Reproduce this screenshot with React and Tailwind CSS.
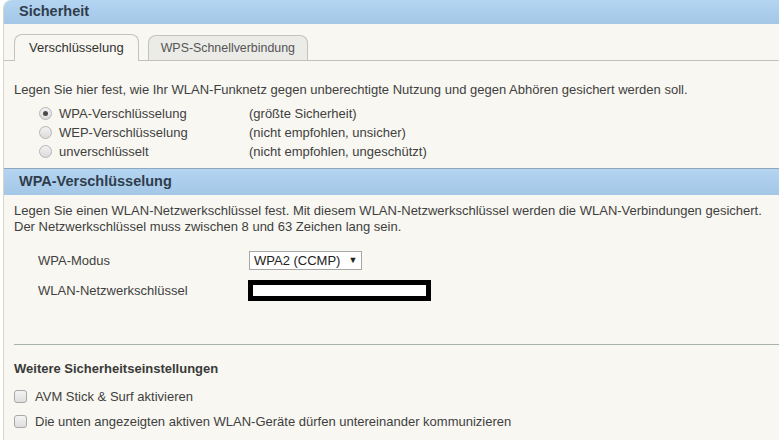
import React from 'react'

const FONT = { fontFamily: '"Liberation Sans", Arial, sans-serif' }

function Radio({ checked }) {
  return (
    <span className="w-[13px] h-[13px] rounded-full border border-[#b5b5b5] bg-gradient-to-b from-[#f2f2f2] to-[#dcdcdc] flex items-center justify-center">
      {checked && <span className="w-[5px] h-[5px] rounded-full bg-[#4a4a4a]" />}
    </span>
  )
}

function Check() {
  return <span className="w-[13px] h-[13px] rounded-[3px] border border-[#a9a9a9] bg-gradient-to-b from-[#f4f4f4] to-[#dedede]" />
}

const options = [
  ['WPA-Verschlüsselung', '(größte Sicherheit)', true],
  ['WEP-Verschlüsselung', '(nicht empfohlen, unsicher)', false],
  ['unverschlüsselt', '(nicht empfohlen, ungeschützt)', false],
]

export default function App() {
  return (
    <div className="w-[779px] h-[440px] bg-white overflow-hidden text-[13px] text-[#3f3f3f]" style={FONT}>
      <div className="ml-[3px] h-full border-l border-[#d9d7bf] rounded-tl-[8px] bg-[#f8f7f1]">
        {/* Header */}
        <div className="h-[24px] rounded-tl-[8px] bg-gradient-to-b from-[#b3d5f2] to-[#a5c7e7] pl-[15px] flex items-center">
          <span className="font-bold text-[14.5px] text-[#2f3d4c]">Sicherheit</span>
        </div>

        {/* Tabs */}
        <div className="mt-[10px] h-[27px] flex items-end pl-[10px] gap-[9px] border-b border-[#c4c3bb]">
          <div className="h-[27px] -mb-px px-[14px] flex items-center border border-b-0 border-[#c4c3bb] rounded-t-[8px] bg-[#f8f7f1] text-[#333]">
            Verschlüsselung
          </div>
          <div className="h-[25px] px-[12px] flex items-center border border-b-0 border-[#c4c3bb] rounded-t-[8px] bg-[#ebebe7] text-[12.4px] text-[#555]">
            WPS-Schnellverbindung
          </div>
        </div>

        <div className="pl-[10px] pt-[21px]">
          <p className="leading-[15px]">Legen Sie hier fest, wie Ihr WLAN-Funknetz gegen unberechtigte Nutzung und gegen Abhören gesichert werden soll.</p>
          <div className="mt-[7px] flex flex-col">
            {options.map(([l, d, c]) => (
              <div key={l} className="h-[19px] flex items-center">
                <span className="w-[25px]" />
                <Radio checked={c} />
                <span className="w-[197px] pl-[7px]">{l}</span>
                <span>{d}</span>
              </div>
            ))}
          </div>
        </div>

        {/* WPA section */}
        <div className="mt-[7px] h-[27px] border-t border-[#8fa7bd] bg-gradient-to-b from-[#b3d5f2] to-[#a5c7e7] pl-[15px] flex items-center">
          <span className="font-bold text-[14.5px] text-[#2f3d4c]">WPA-Verschlüsselung</span>
        </div>

        <div className="pl-[10px] pt-[8px]">
          <p className="leading-[16px]">
            Legen Sie einen WLAN-Netzwerkschlüssel fest. Mit diesem WLAN-Netzwerkschlüssel werden die WLAN-Verbindungen gesichert.
            <br />
            Der Netzwerkschlüssel muss zwischen 8 und 63 Zeichen lang sein.
          </p>
          <div className="mt-[16px] pl-[24px] flex flex-col gap-[10px]">
            <div className="flex items-center h-[19px]">
              <span className="w-[211px]">WPA-Modus</span>
              <span className="h-[19px] px-[4px] flex items-center gap-[8px] border border-[#a7a7a7] bg-white text-[#222]">
                WPA2 (CCMP)
                <span className="text-[9px]">▼</span>
              </span>
            </div>
            <div className="flex items-center h-[21px]">
              <span className="w-[210px]">WLAN-Netzwerkschlüssel</span>
              <span className="w-[183px] h-[21px] border-[5px] border-black bg-white" />
            </div>
          </div>
        </div>

        {/* Divider */}
        <div className="ml-[10px] mt-[43px] border-t border-[#a9b3a5]" />

        <div className="pl-[10px] pt-[16px]">
          <h3 className="font-bold text-[#3a3a3a] leading-[16px]">Weitere Sicherheitseinstellungen</h3>
          <div className="mt-[10px] flex flex-col gap-[6px]">
            <label className="h-[19px] flex items-center gap-[8px]"><Check />AVM Stick &amp; Surf aktivieren</label>
            <label className="h-[19px] flex items-center gap-[8px]"><Check />Die unten angezeigten aktiven WLAN-Geräte dürfen untereinander kommunizieren</label>
          </div>
        </div>
      </div>
    </div>
  )
}
